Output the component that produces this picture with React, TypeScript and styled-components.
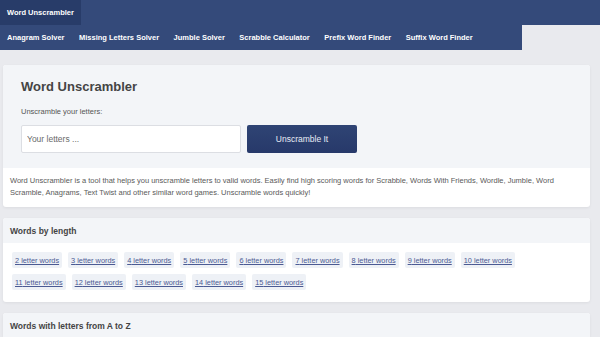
import React from 'react';
import styled, { createGlobalStyle } from 'styled-components';

const menu = [
    'Anagram Solver',
    'Missing Letters Solver',
    'Jumble Solver',
    'Scrabble Calculator',
    'Prefix Word Finder',
    'Suffix Word Finder',
];

const lengths = [2, 3, 4, 5, 6, 7, 8, 9, 10, 11, 12, 13, 14, 15];

const App = () => {
    return (
        <>
            <GlobalStyle />
            <TopBar>
                <Brand>Word Unscrambler</Brand>
            </TopBar>
            <MenuRow>
                {menu.map((item) => (
                    <MenuItem key={item}>{item}</MenuItem>
                ))}
            </MenuRow>
            <Main>
                <Card>
                    <SolverArea>
                        <Title>Word Unscrambler</Title>
                        <Label>Unscramble your letters:</Label>
                        <Form>
                            <Input placeholder="Your letters ..." />
                            <Button>Unscramble It</Button>
                        </Form>
                    </SolverArea>
                    <Description>
                        Word Unscrambler is a tool that helps you unscramble letters to valid words. Easily find high scoring words for Scrabble, Words With Friends, Wordle, Jumble, Word Scramble, Anagrams, Text Twist and other similar word games. Unscramble words quickly!
                    </Description>
                </Card>
                <Card>
                    <CardHeader>Words by length</CardHeader>
                    <ChipList>
                        {lengths.map((n) => (
                            <Chip key={n} href="#">{n} letter words</Chip>
                        ))}
                    </ChipList>
                </Card>
                <Card>
                    <CardHeader>Words with letters from A to Z</CardHeader>
                </Card>
            </Main>
        </>
    );
};

const GlobalStyle = createGlobalStyle`
    body {
        margin: 0;
        background: #e9eaee;
        font-family: "Liberation Sans", Arial, sans-serif;
        color: #555;
    }
`

const TopBar = styled.div`
    display: flex;
    height: 25px;
    background: #344a7a;
`

const Brand = styled.div`
    display: flex;
    align-items: center;
    padding: 0 7px;
    background: #283c69;
    color: #fff;
    font-size: 7.5px;
    font-weight: 700;
`

const MenuRow = styled.div`
    display: flex;
    align-items: center;
    gap: 14.5px;
    width: 515px;
    height: 25px;
    padding-left: 7px;
    background: #344a7a;
`

const MenuItem = styled.span`
    color: #fff;
    font-size: 7.5px;
    font-weight: 700;
    white-space: nowrap;
    cursor: pointer;
`

const Main = styled.div`
    display: flex;
    flex-direction: column;
    gap: 11px;
    padding: 15px 10px 0 3px;
`

const Card = styled.div`
    background: #fff;
    border-radius: 3px;
    box-shadow: 0 1px 3px rgba(0, 0, 0, 0.06);
    overflow: hidden;
`

const SolverArea = styled.div`
    display: flex;
    flex-direction: column;
    padding: 13px 18px 15px;
    background: #f3f5f8;
`

const Title = styled.h1`
    margin: 0;
    font-size: 13px;
    line-height: 17px;
    font-weight: 700;
    color: #444;
`

const Label = styled.div`
    margin-top: 12px;
    font-size: 7.5px;
    line-height: 10px;
    color: #555;
`

const Form = styled.div`
    display: flex;
    gap: 6px;
    margin-top: 8px;
`

const Input = styled.input`
    box-sizing: border-box;
    width: 220px;
    height: 28px;
    padding: 0 5px;
    border: 1px solid #dcdee3;
    border-radius: 2px;
    background: #fff;
    font-family: inherit;
    font-size: 8.5px;
    outline: none;

    &::placeholder {
        color: #6a6a6a;
    }
`

const Button = styled.button`
    width: 110px;
    height: 28px;
    border: none;
    border-radius: 2px;
    background: linear-gradient(#2f4474, #27396a);
    color: #e8ecf5;
    font-family: inherit;
    font-size: 8.5px;
    cursor: pointer;
`

const Description = styled.p`
    margin: 0;
    padding: 7px 10px 8px 7px;
    font-size: 7.5px;
    line-height: 12px;
    color: #5a5a5a;
`

const CardHeader = styled.div`
    display: flex;
    align-items: center;
    height: 25px;
    padding: 0 7px;
    background: #f3f5f8;
    color: #444;
    font-size: 8.5px;
    font-weight: 700;
`

const ChipList = styled.div`
    display: flex;
    flex-wrap: wrap;
    gap: 6px 6px;
    width: 520px;
    padding: 9px 9px 12px;
`

const Chip = styled.a`
    display: flex;
    align-items: center;
    height: 16px;
    padding: 0 3px;
    border-radius: 2px;
    background: #eef1f6;
    color: #4b5a93;
    font-size: 7.35px;
    text-decoration: underline;
    white-space: nowrap;
`

export default App;
